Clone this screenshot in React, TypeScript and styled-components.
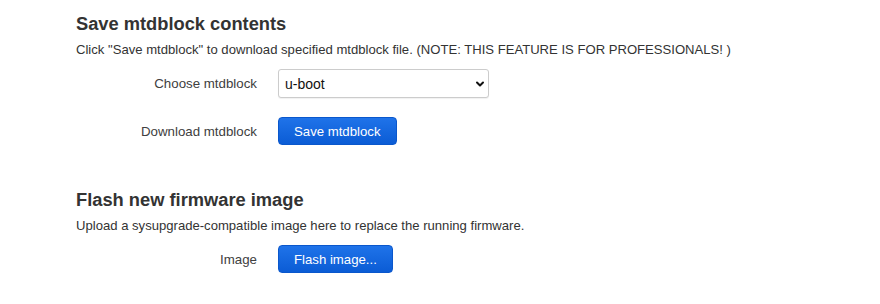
import styled, { createGlobalStyle } from "styled-components";
import { ChevronDown } from "lucide-react";

const GlobalStyle = createGlobalStyle`
    body {
        margin: 0;
        background: #ffffff;
        font-family: "Liberation Sans", Arial, Helvetica, sans-serif;
        color: #404040;
    }
`

type FieldRowPropsType = {
    label: string
    children: React.ReactNode
}

const FieldRow = (props: FieldRowPropsType) => {
    return (
        <Row>
            <Label>{props.label}</Label>
            <Field>{props.children}</Field>
        </Row>
    );
};

export const App = () => {
    return (
        <Page>
            <GlobalStyle/>
            <Section>
                <Title>Save mtdblock contents</Title>
                <Description>
                    Click "Save mtdblock" to download specified mtdblock file. (NOTE: THIS FEATURE IS FOR PROFESSIONALS! )
                </Description>
                <Rows>
                    <FieldRow label="Choose mtdblock">
                        <SelectWrap>
                            <Select defaultValue="u-boot">
                                <option value="u-boot">u-boot</option>
                                <option value="u-boot-env">u-boot-env</option>
                                <option value="factory">factory</option>
                                <option value="firmware">firmware</option>
                            </Select>
                            <Chevron>
                                <ChevronDown size={12} strokeWidth={4}/>
                            </Chevron>
                        </SelectWrap>
                    </FieldRow>
                    <FieldRow label="Download mtdblock">
                        <Button type="button">Save mtdblock</Button>
                    </FieldRow>
                </Rows>
            </Section>

            <Section $spaced>
                <Title>Flash new firmware image</Title>
                <Description>
                    Upload a sysupgrade-compatible image here to replace the running firmware.
                </Description>
                <Rows>
                    <FieldRow label="Image">
                        <Button type="button">Flash image...</Button>
                    </FieldRow>
                </Rows>
            </Section>
        </Page>
    );
};

export default App;

const Page = styled.div`
    padding: 12px 0 0 76px;
`

const Section = styled.section<{ $spaced?: boolean }>`
    margin-top: ${props => props.$spaced ? "43px" : "0"};
`

const Title = styled.h3`
    margin: 0 0 4px;
    font-size: 18.3px;
    line-height: 24px;
    font-weight: bold;
    color: #333333;
`

const Description = styled.p`
    margin: 0 0 9px;
    font-size: 13.1px;
    line-height: 20px;
    color: #333333;
`

const Rows = styled.div`
    display: flex;
    flex-direction: column;
    gap: 19px;
`

const Row = styled.div`
    display: grid;
    grid-template-columns: 181px auto;
    column-gap: 21px;
    align-items: center;
`

const Label = styled.label`
    text-align: right;
    font-size: 13.3px;
    color: #404040;
`

const Field = styled.div`
    display: flex;
    align-items: center;
`

const SelectWrap = styled.div`
    position: relative;
    width: 211px;
    height: 29px;
`

const Select = styled.select`
    appearance: none;
    width: 100%;
    height: 100%;
    box-sizing: border-box;
    padding: 0 24px 0 6px;
    border: 1px solid #cccccc;
    border-radius: 3px;
    background: #ffffff;
    box-shadow: 0 1px 1px rgba(0, 0, 0, 0.06);
    font-family: "Liberation Sans", Arial, sans-serif;
    font-size: 14px;
    color: #111111;
`

const Chevron = styled.span`
    position: absolute;
    right: 3px;
    top: 9px;
    display: flex;
    color: #111111;
    pointer-events: none;
`

const Button = styled.button`
    height: 28px;
    box-sizing: border-box;
    padding: 0 15px;
    border: 1px solid #0a57cc;
    border-radius: 4px;
    background: linear-gradient(#1f73e9, #0b5cd5);
    color: #ffffff;
    font-family: "Liberation Sans", Arial, sans-serif;
    font-size: 13.2px;
    cursor: pointer;
`
